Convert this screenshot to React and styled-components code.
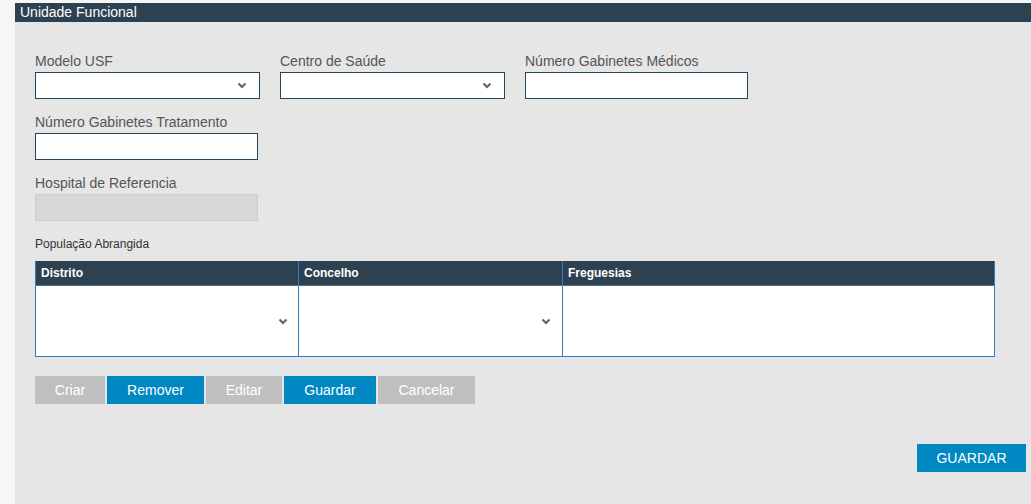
import React from 'react';
import styled, { createGlobalStyle } from 'styled-components';

const GlobalStyle = createGlobalStyle`
  html, body {
    margin: 0;
    padding: 0;
    background: #f6f6f6;
    font-family: 'Liberation Sans', Arial, sans-serif;
  }
`;

const Page = styled.div`
  display: flex;
  padding: 3px 0 0 15px;
  height: 501px;
`;

const Panel = styled.div`
  flex: 1;
  display: flex;
  flex-direction: column;
  background: #e6e6e6;
`;

const PanelHeader = styled.div`
  background: #2d4151;
  color: #fff;
  font-size: 14px;
  line-height: 19px;
  padding-left: 5px;
`;

const Body = styled.div`
  flex: 1;
  display: flex;
  flex-direction: column;
  padding: 30px 5px 0 20px;
`;

const Row = styled.div`
  display: flex;
  gap: 20px;
  margin-bottom: 14px;
`;

const Field = styled.div`
  display: flex;
  flex-direction: column;
  width: ${p => p.width}px;
`;

const Label = styled.label`
  font-size: 14px;
  line-height: 18px;
  color: #555;
  margin-bottom: 2px;
`;

const Box = styled.div`
  position: relative;
  box-sizing: border-box;
  height: 27px;
  background: ${p => (p.disabled ? '#d7d7d7' : '#fff')};
  border: 1px solid ${p => (p.disabled ? '#cdcdcd' : '#22465e')};
`;

const ChevronSvg = styled.svg`
  position: absolute;
  right: ${p => p.right}px;
  top: ${p => p.top}px;
`;

const Chevron = ({ right = 12, top = 9 }) => (
  <ChevronSvg width="10" height="7" viewBox="0 0 10 7" right={right} top={top}>
    <polyline points="1.5,1.5 5,5 8.5,1.5" fill="none" stroke="#666" strokeWidth="2.2" />
  </ChevronSvg>
);

const SectionTitle = styled.div`
  font-size: 12px;
  line-height: 16px;
  color: #333;
  margin-top: 1px;
  margin-bottom: 9px;
`;

const Table = styled.div`
  width: 960px;
  box-sizing: border-box;
  display: grid;
  grid-template-columns: 262px 264px 1fr;
  border: 1px solid #2f7cc2;
  border-top: none;
`;

const HeadCell = styled.div`
  background: #2d4151;
  color: #fff;
  font-size: 12px;
  font-weight: bold;
  height: 25px;
  line-height: 24px;
  padding-left: 5px;
  border-left: ${p => (p.first ? 'none' : '1px solid #2f7cc2')};
  border-bottom: 1px solid #5b6f7d;
  box-sizing: border-box;
`;

const Cell = styled.div`
  position: relative;
  height: 70px;
  background: #fff;
  border-left: ${p => (p.first ? 'none' : '1px solid #2f7cc2')};
`;

const Actions = styled.div`
  display: flex;
  gap: 2px;
  margin-top: 19px;
`;

const Button = styled.button`
  height: 28px;
  width: ${p => p.width}px;
  border: none;
  padding: 0;
  font-family: 'Liberation Sans', Arial, sans-serif;
  font-size: 14px;
  color: #fff;
  background: ${p => (p.primary ? '#0088c3' : '#bfbfbf')};
  cursor: pointer;
`;

const Footer = styled.div`
  display: flex;
  justify-content: flex-end;
  margin-top: 40px;
`;

const columns = ['Distrito', 'Concelho', 'Freguesias'];

export default function App() {
  return (
    <>
      <GlobalStyle />
      <Page>
        <Panel>
          <PanelHeader>Unidade Funcional</PanelHeader>
          <Body>
            <Row>
              <Field width={225}>
                <Label>Modelo USF</Label>
                <Box>
                  <Chevron />
                </Box>
              </Field>
              <Field width={225}>
                <Label>Centro de Saúde</Label>
                <Box>
                  <Chevron />
                </Box>
              </Field>
              <Field width={223}>
                <Label>Número Gabinetes Médicos</Label>
                <Box />
              </Field>
            </Row>
            <Row>
              <Field width={223}>
                <Label>Número Gabinetes Tratamento</Label>
                <Box />
              </Field>
            </Row>
            <Row>
              <Field width={223}>
                <Label>Hospital de Referencia</Label>
                <Box disabled />
              </Field>
            </Row>
            <SectionTitle>População Abrangida</SectionTitle>
            <Table>
              {columns.map((c, i) => (
                <HeadCell key={c} first={i === 0}>
                  {c}
                </HeadCell>
              ))}
              <Cell first>
                <Chevron right={10} top={32} />
              </Cell>
              <Cell>
                <Chevron right={11} top={32} />
              </Cell>
              <Cell />
            </Table>
            <Actions>
              <Button width={70}>Criar</Button>
              <Button primary width={97}>Remover</Button>
              <Button width={76}>Editar</Button>
              <Button primary width={92}>Guardar</Button>
              <Button width={97}>Cancelar</Button>
            </Actions>
            <Footer>
              <Button primary width={109}>GUARDAR</Button>
            </Footer>
          </Body>
        </Panel>
      </Page>
    </>
  );
}
